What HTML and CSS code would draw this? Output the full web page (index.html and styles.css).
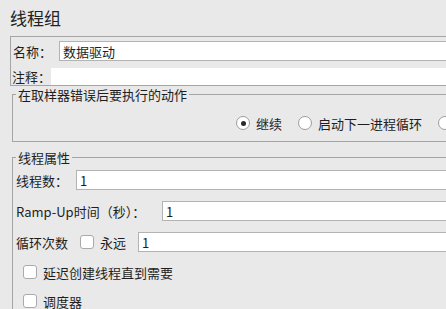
FILE: index.html
```html
<!DOCTYPE html>
<html lang="zh-CN">
<head>
    <meta charset="UTF-8">
    <meta name="viewport" content="width=device-width, initial-scale=1.0">
    <title>线程组</title>
    <link rel="stylesheet" href="styles.css">
</head>
<body>
    <div class="panel">
        <h1 class="title">线程组</h1>

        <div class="name-box">
            <div class="name-row">
                <label class="name-label" for="name">名称：</label>
                <input class="text-input" id="name" type="text" value="数据驱动">
            </div>
            <div class="note-row">
                <label class="note-label" for="note">注释：</label>
                <input class="note-input" id="note" type="text">
            </div>
        </div>

        <fieldset class="group error-group">
            <legend>在取样器错误后要执行的动作</legend>
            <div class="radio-row">
                <label class="radio-item"><input type="radio" name="onError" checked>继续</label>
                <label class="radio-item"><input type="radio" name="onError">启动下一进程循环</label>
                <label class="radio-item"><input type="radio" name="onError">停止线程</label>
                <label class="radio-item"><input type="radio" name="onError">停止测试</label>
            </div>
        </fieldset>

        <fieldset class="group thread-group">
            <legend>线程属性</legend>

            <div class="prop-row">
                <label class="prop-label threads-label" for="threads">线程数：</label>
                <input class="text-input" id="threads" type="text" value="1">
            </div>

            <div class="prop-row">
                <label class="prop-label ramp-label" for="ramp">Ramp-Up时间（秒）：</label>
                <input class="text-input" id="ramp" type="text" value="1">
            </div>

            <div class="prop-row">
                <span class="prop-label loop-label">循环次数</span>
                <label class="check-item forever"><input type="checkbox">永远</label>
                <input class="text-input" id="loops" type="text" value="1">
            </div>

            <div class="check-row first-check">
                <label class="check-item"><input type="checkbox">延迟创建线程直到需要</label>
            </div>

            <div class="check-row">
                <label class="check-item"><input type="checkbox">调度器</label>
            </div>
        </fieldset>
    </div>
</body>
</html>
```

FILE: styles.css
```css
* {
    margin: 0;
    padding: 0;
    box-sizing: border-box;
}

html, body {
    overflow: hidden;
}

body {
    background-color: #e9e9e9;
    color: #1e1e1e;
    font-family: "Noto Sans CJK SC", "Noto Sans", sans-serif;
    font-size: 13px;
}

input {
    font: inherit;
    color: inherit;
}

.title {
    font-size: 17px;
    font-weight: normal;
    line-height: 20px;
    padding: 8px 10px;
    color: #222;
}

/* name + comment block */
.name-box {
    margin: 0 -40px 0 10px;
    border: 1px solid #a5a5a5;
    border-right: none;
    padding-top: 4px;
}

.name-row,
.note-row {
    display: flex;
    align-items: center;
}

.name-row {
    height: 20px;
}

.note-row {
    height: 17px;
    margin-top: 7px;
}

.name-label,
.note-label,
.prop-label {
    flex-shrink: 0;
    white-space: nowrap;
}

.name-label {
    width: 48px;
    padding-left: 2px;
}

.note-label {
    width: 40px;
    padding-left: 1px;
}

.text-input {
    flex: 1;
    min-width: 0;
    height: 20px;
    border: 1px solid #b3b3b3;
    background: #fff;
    padding: 0 3px;
    outline: none;
}

.note-input {
    flex: 1;
    min-width: 0;
    height: 17px;
    border: none;
    background: #fff;
    outline: none;
}

/* titled groups */
.group {
    margin: 1px -40px 0 12px;
    padding: 0 0 0 3px;
    border: 1px solid #a5a5a5;
    border-right: none;
    min-width: 0;
}

.group legend {
    padding: 0 2px;
    line-height: 15px;
    font-size: 13px;
}

.thread-group {
    margin-top: 8px;
}

.radio-row {
    display: flex;
    align-items: center;
    gap: 16px;
    height: 18px;
    margin: 12px 0 9px;
    padding-left: 220px;
    white-space: nowrap;
}

.radio-item,
.check-item {
    display: flex;
    align-items: center;
    gap: 6px;
    white-space: nowrap;
    flex-shrink: 0;
}

.radio-item input {
    appearance: none;
    width: 14px;
    height: 14px;
    border: 1px solid #9d9d9d;
    border-radius: 50%;
    background: #fff;
    display: grid;
    place-items: center;
}

.radio-item input:checked::before {
    content: "";
    width: 5px;
    height: 5px;
    border-radius: 50%;
    background: #2a2a2a;
}

.check-item input {
    appearance: none;
    width: 14px;
    height: 14px;
    border: 1px solid #aaa;
    border-radius: 3px;
    background: #fff;
}

.prop-row {
    display: flex;
    align-items: center;
    height: 20px;
    margin-top: 11px;
}

.prop-row:first-of-type {
    margin-top: 5px;
}

.threads-label {
    width: 60px;
}

.ramp-label {
    width: 146px;
}

.loop-label {
    width: 64px;
}

.forever {
    margin-right: 12px;
}

.check-row {
    display: flex;
    align-items: center;
    height: 20px;
    margin-top: 9px;
    padding-left: 7px;
}

.first-check {
    margin-top: 10px;
}
```
